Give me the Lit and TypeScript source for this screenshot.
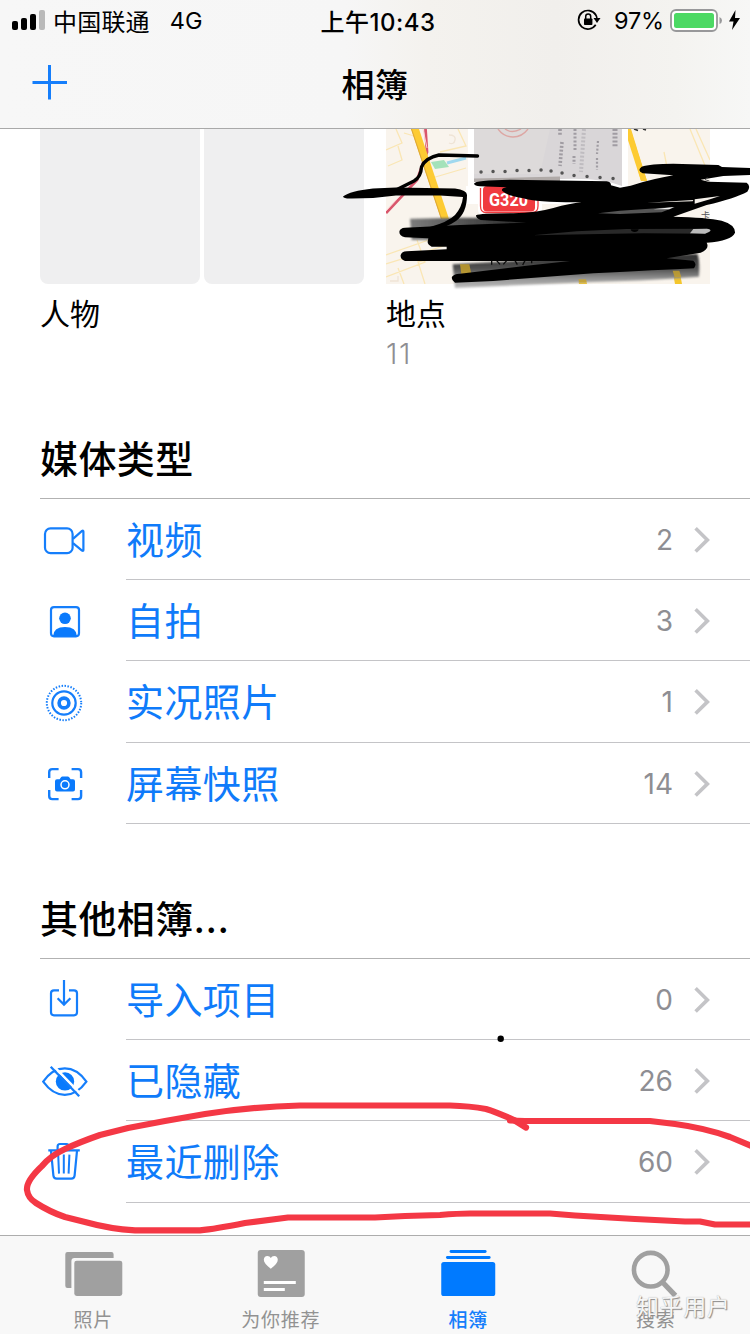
import { LitElement, html, svg, css } from 'lit';
import { customElement, property } from 'lit/decorators.js';

interface AlbumRow {
  icon: string;
  name: string;
  count: number;
}

const mediaTypes: AlbumRow[] = [
  { icon: 'video', name: '视频', count: 2 },
  { icon: 'selfie', name: '自拍', count: 3 },
  { icon: 'live', name: '实况照片', count: 1 },
  { icon: 'screenshot', name: '屏幕快照', count: 14 },
];

const otherAlbums: AlbumRow[] = [
  { icon: 'import', name: '导入项目', count: 0 },
  { icon: 'hidden', name: '已隐藏', count: 26 },
  { icon: 'trash', name: '最近删除', count: 60 },
];

const tabs = [
  { icon: 'photos', name: '照片', active: false },
  { icon: 'foryou', name: '为你推荐', active: false },
  { icon: 'albums', name: '相簿', active: true },
  { icon: 'search', name: '搜索', active: false },
];

const rowIcons: Record<string, unknown> = {
  video: svg`
    <rect x="5" y="12.4" width="27.600" height="24.800" rx="5.500"/>
    <path d="M33 22.800 42 15Q43.400 14.200 43.400 15.600V34Q43.400 35.400 42 34.600L33 27.200"/>`,
  selfie: svg`
    <rect x="11" y="10.100" width="28" height="29.200" rx="3"/>
    <circle class="solid" cx="25" cy="21.300" r="5.800"/>
    <path class="solid" d="M13 39.300Q13.600 30 25 30T37 39.300Z"/>`,
  live: svg`
    <circle cx="24" cy="25" r="17.200" stroke-width="2" stroke-dasharray="1.500 1.502"/>
    <circle cx="24" cy="25" r="11.700"/>
    <circle cx="24" cy="25" r="4.900" stroke-width="3.600"/>`,
  screenshot: svg`
    <path d="M9.200 19V13.200Q9.200 10.100 12.300 10.100H18.600M31.600 10.100H38Q41.100 10.100 41.100 13.200V19M41.100 31V37Q41.100 40.100 38 40.100H31.600M18.600 40.100H12.300Q9.200 40.100 9.200 37V31" stroke-width="2.400"/>
    <path class="solid" d="M17 20.300H19.600L21.200 18Q21.600 17.400 22.400 17.400H27.800Q28.600 17.400 29 18L30.600 20.300H33Q35 20.300 35 22.300V30.600Q35 32.600 33 32.600H17Q15 32.600 15 30.600V22.300Q15 20.300 17 20.300Z"/>
    <circle cx="25" cy="25.800" r="4" stroke="#fff" stroke-width="1.500"/>`,
  import: svg`
    <path d="M19 14.300H14Q11 14.300 11 17.300V36.300Q11 39.300 14 39.300H34Q37 39.300 37 36.300V17.300Q37 14.300 34 14.300H29"/>
    <path d="M24 4V28.600M17.600 22.200 24 28.600 30.400 22.200"/>`,
  hidden: svg`
    <circle class="solid" cx="25" cy="24.400" r="9.200"/>
    <path d="M3.200 24.600Q12.600 11.400 24.800 11.400T46.400 24.600Q37 37.800 24.800 37.800T3.200 24.600Z"/>
    <path d="M12.600 8.200 41.400 37.800" stroke="#fff" stroke-width="2.600"/>
    <path d="M10.700 9.800 39.200 39.300" stroke-width="2.300"/>`,
  trash: svg`
    <path d="M8.300 12.400H39.800M17.600 12V8.400Q17.600 6 20 6H26.400Q28.800 6 28.800 8.400V12"/>
    <path d="M11 12.800 13.400 37.600Q13.800 40.600 16.600 40.600H31.400Q34.200 40.600 34.600 37.600L37 12.800"/>
    <path d="M18.200 16.600 19 35.600M23.800 16.600V35.600M29.400 16.600 28.600 35.600" stroke-width="2"/>`,
};

const tabIcons: Record<string, unknown> = {
  photos: svg`
    <path d="M5.500 6H49.400Q51.600 6 51.600 8.200V12H12.400Q9.400 12 9.400 15V42H5.500Q3.300 42 3.300 39.800V8.200Q3.300 6 5.500 6Z"/>
    <rect x="12.300" y="14.700" width="48" height="35.300" rx="2.400"/>`,
  foryou: svg`
    <rect x="8.750" y="4" width="47" height="47" rx="3"/>
    <path fill="#fff" d="M21.800 22.700Q14.800 17.600 14.800 13.800 15 10 18.400 10 20.800 10 21.800 12 22.800 10 25.200 10 28.600 10 28.800 13.800 28.800 17.600 21.800 22.700Z"/>
    <path fill="#fff" d="M14.800 35H46.800V38H14.800ZM14.800 42H35.800V45H14.800Z"/>`,
  albums: svg`
    <rect x="12.600" y="4" width="37" height="3" rx="1.400"/>
    <rect x="9" y="10" width="44.600" height="3" rx="1.400"/>
    <rect x="4.250" y="16" width="54" height="34" rx="2.600"/>`,
  search: svg`
    <circle cx="26.750" cy="23.700" r="16.800" fill="none" stroke="currentColor" stroke-width="4.600"/>
    <path d="M38.600 36.200 51.400 49.600" stroke="currentColor" stroke-width="5.200"/>`,
};

@customElement('album-list')
class AlbumList extends LitElement {
  @property() heading = '';
  @property({ attribute: false }) rows: AlbumRow[] = [];

  static styles = css`
    :host { display: block; }
    h2 {
      margin: 0 0 0 40px;
      height: 77px;
      line-height: 77px;
      font-size: 38px;
      font-weight: 500;
      letter-spacing: 0.4px;
      border-bottom: 1px solid #b2b2b2;
      color: #000;
    }
    .row { display: flex; align-items: center; height: 81.2px; padding-left: 40px; }
    .icon {
      flex: none; width: 48px; height: 48px; color: #157efb;
      fill: none; stroke: currentColor; stroke-width: 2.2;
    }
    .solid { fill: #0a7afc; stroke: none; }
    .body {
      flex: 1; display: flex; align-items: center; box-sizing: border-box;
      height: 100%; margin-left: 38px; padding-right: 40px;
      border-bottom: 1px solid #c4c4c7;
    }
    .name { flex: 1; font-size: 38px; line-height: 78px; padding-top: 2px; color: #0f7bfa; letter-spacing: 0.4px; }
    .count { font-family: Inter, "Liberation Sans", sans-serif; font-size: 28px; padding-top: 2px; color: #8e8e93; }
    .chevron { width: 17px; height: 28px; margin-left: 20px; fill: none; stroke: #c4c4c7; stroke-width: 3.6; }
  `;

  render() {
    return html`
      <h2>${this.heading}</h2>
      ${this.rows.map(
        (r) => html`
          <div class="row">
            <svg class="icon" viewBox="0 0 48 48">${rowIcons[r.icon]}</svg>
            <div class="body">
              <span class="name">${r.name}</span>
              <span class="count">${r.count}</span>
              <svg class="chevron" viewBox="0 0 17 28"><path d="M2.600 3.300 14.400 14.900 2.600 26.500"/></svg>
            </div>
          </div>
        `,
      )}
    `;
  }
}

@customElement('app-root')
class AppRoot extends LitElement {
  static styles = css`
    :host {
      display: flex; flex-direction: column; position: relative;
      width: 750px; height: 1334px; overflow: hidden; background: #fff; color: #000;
      font-family: Inter, "Noto Sans CJK SC", sans-serif;
    }
    .header {
      flex: none; height: 128px; border-bottom: 1px solid #a9a9a9;
      background: linear-gradient(90deg, #f7f7f7 0%, #f6f6f6 46%, #f4f2ee 57%, #f1efec 74%, #f4f3f0 90%, #f7f7f6 100%);
    }
    .status { display: grid; grid-template-columns: 1fr auto 1fr; height: 40px; align-items: center; font-size: 24px; }
    .side { display: flex; align-items: center; }
    .left { padding-left: 12px; }
    .right { justify-content: flex-end; padding-right: 9px; }
    .signal { width: 33px; height: 20px; margin-right: 8px; }
    .carrier { letter-spacing: 0.2px; }
    .network { margin-left: 20px; font-size: 23.5px; padding-top: 1px; }
    .time { font-weight: 500; letter-spacing: 0.5px; padding-left: 6px; }
    .lock { width: 24px; height: 22px; margin-right: 13px; }
    .percent { font-size: 23.5px; padding-top: 1px; letter-spacing: -0.2px; }
    .battery { width: 52px; height: 24px; margin-left: 6px; }
    .bolt { width: 13px; height: 20px; margin-left: 6px; }
    .nav { display: grid; grid-template-columns: 1fr auto 1fr; height: 88px; align-items: center; }
    .plus { width: 36px; height: 36px; margin-left: 32px; margin-bottom: 4px; }
    .title { font-size: 33px; font-weight: 500; line-height: 86px; padding-top: 2px; letter-spacing: 0.4px; }
    .content { flex: 1; min-height: 0; overflow: hidden; }
    .cards { display: flex; gap: 22px; padding-left: 40px; height: 292px; }
    .card { width: 324px; }
    .people { display: flex; gap: 4px; height: 155px; }
    .face { flex: 1; background: #efeff0; border-radius: 0 0 8px 8px; }
    .map { display: block; width: 324px; height: 155px; }
    .caption { font-size: 30px; line-height: 40px; margin-top: 10px; }
    .tally { font-size: 29px; line-height: 40px; color: #8e8e93; font-weight: 300; letter-spacing: 1.6px; }
    .other { margin-top: 57.2px; }
    .tabbar {
      flex: none; display: grid; grid-template-columns: repeat(4, 1fr);
      height: 98px; border-top: 1px solid #adadad; background: #f8f8f8;
    }
    .tab { display: flex; flex-direction: column; align-items: center; padding-top: 10px; color: #a0a0a0; fill: currentColor; }
    .tab svg { width: 64px; height: 52px; }
    .tab span { font-size: 19px; line-height: 24px; margin-top: 11px; margin-left: -1px; letter-spacing: 0.8px; color: #929292; }
    .tab.active { color: #007aff; }
    .tab.active span { color: #157efb; font-weight: 500; }
    .ink { position: absolute; inset: 0; width: 750px; height: 1334px; pointer-events: none; }
    .watermark {
      position: absolute; left: 636px; top: 1290px; font-size: 23px; line-height: 34px;
      color: #f6f6f6; letter-spacing: 0.6px;
      text-shadow: 1px 1px 1px #888, 0 0 1px #aaa;
    }
  `;

  private map() {
    return html`
      <svg class="map" viewBox="386 129 324 155">
        <rect x="386" y="129" width="324" height="155" fill="#f9f4ed"/>
        <g fill="none" stroke="#fae6b4" stroke-width="1.3">
          <path d="M386 150 402 143 396 129M388 166 402 160 398 146M386 255 440 236M386 277 425 262 417 240M404 284 398 268M386 264 450 244M425 284 418 262 460 250M404 133 414 136M440 152 466 146 458 129M432 178 466 168M690 129 706 168M696 129 710 160M664 152 668 172"/>
          <path d="M390 281h8v-5M449 135q7 0 6 5t-6 3" stroke="#efe4d6"/>
        </g>
        <path d="M431 162 444 160 449 167 435 169Z" fill="#a4e2ba"/>
        <path d="M447 163 466 158" stroke="#9fd8ef" stroke-width="3"/>
        <path d="M425.500 129 427 152 417 180 386 213" fill="none" stroke="#d9566c" stroke-width="2.8"/>
        <path d="M423 129 427 148M408 187 386 211" stroke="#fbd5d5" stroke-width="1"/>
        <path d="M411 129H419L449 219H441Z" fill="#fdcb33"/>
        <path d="M411.500 129 441.500 219" stroke="#dca63a" stroke-width="1"/>
        <path d="M627 129H631L647 181H641L627 137Z" fill="#fdcb33"/>
        <rect x="468" y="129" width="160" height="61" fill="#fff"/>
        <path d="M628 133 631 131 647 181H641Z" fill="#fdcb33"/>
        <path d="M474 129H622V186Q600 177 560 179L474 181Z" fill="#d9d6d8"/>
        <path d="M474 129H550L540 174H474Z" fill="#dddada"/>
        <path d="M474 178.500 560 176.500 560 181 474 182Z" fill="#b0aaa8"/>
        <path d="M498 129Q504 137 513 137T528 129M505 129Q512 134 521 129" fill="none" stroke="#dda7a4" stroke-width="1.4"/>
        <path d="M481 172h.1M493 171.500h.1M505 171.500h.1M517 170.500h.1M529 170.500h.1M541 170h.1M551 171h.1M562 173h.1M574 175.500h.1M587 176.500h.1M600 177.500h.1M613 178.500h.1" stroke="#555" stroke-width="3.4" stroke-linecap="round"/>
        <g fill="none" stroke="#a09ca2" stroke-dasharray="2 1.800">
          <path d="M560 129V135M562 142 560 166" stroke-width="3.600"/>
          <path d="M575 129V150M574 156V164" stroke-width="3"/>
          <path d="M584 129 581 172" stroke="#bfbcc0" stroke-width="4"/>
          <path d="M598 141 597 154M597 158V170" stroke-width="2.200"/>
          <path d="M615 129V148" stroke-width="5"/>
        </g>
        <path d="M634 129l4 1.500M643 129l3 1" stroke="#333" stroke-width="1.600"/>
        <rect x="466" y="186" width="110" height="18" fill="#fff"/>
        <rect x="478" y="186" width="64" height="29" rx="5" fill="#fff"/>
        <path d="M480.500 188V206Q480.500 212.500 486 212.500H532Q538 212.500 538 206V194" fill="#fff" stroke="#ee3c40" stroke-width="1.300"/>
        <rect x="483" y="186" width="52" height="25.500" rx="4" fill="#f03a3f"/>
        <text x="489" y="205.500" font-size="18.500" font-weight="700" fill="#fff" font-family="Roboto, sans-serif" textLength="39" lengthAdjust="spacingAndGlyphs">G320</text>
        <path d="M577 275H585L587 284H579ZM672 268H679L682 284H675Z" fill="#f4c62c"/>
        <text x="701" y="219" font-size="9" fill="#555">卡</text>
      </svg>
    `;
  }

  private ink() {
    return html`
      <svg class="ink" viewBox="0 0 750 1334">
        <defs>
          <linearGradient id="fadeX" x1="0" x2="1">
            <stop offset="0" stop-color="#7c7c7c"/><stop offset=".3" stop-color="#444"/><stop offset=".6" stop-color="#111"/>
          </linearGradient>
          <linearGradient id="fadeY" x1="0" x2="0" y1="0" y2="1">
            <stop offset="0" stop-color="#2a2a2a"/><stop offset=".45" stop-color="#555"/><stop offset=".75" stop-color="#999"/><stop offset="1" stop-color="#bbb"/>
          </linearGradient>
          <filter id="soft" x="-5%" y="-20%" width="110%" height="140%"><feGaussianBlur stdDeviation="3"/></filter>
        </defs>
        <g transform="translate(460 150) scale(.33333)">
          <path d="M-150 206 0 203 600 208V270H-145Z" fill="url(#fadeX)" filter="url(#soft)"/>
          <path d="M-22 343 300 325 712 312Q720 330 717 380 600 390 400 396L-15 414Z" fill="url(#fadeY)" filter="url(#soft)"/>
          <path d="M0 343H28L34 372H4ZM355 388H378L380 397H358ZM638 362H658L664 382H644Z" fill="#c9a227" opacity=".8"/>
          <path d="M95 332V344M110 332 120 343M140 332 130 343M165 332 172 344M195 332 188 345M215 332V340" stroke="#0c0c0c" stroke-width="4"/>
          <path d="M42 101Q44 90 150 89L440 94Q454 97 453 106L480 113 512 107Q580 86 640 76L548 70Q530 62 545 50 570 41 640 41L775 45 786 51 870 54V75L790 78 722 89 745 95 860 98Q874 108 862 125 825 145 740 165L640 200Q740 202 785 212 826 224 825 248 815 272 740 278 750 296 722 308L620 325 700 332Q712 342 702 355 600 360 400 370L100 393-15 398Q-27 390-24 380-15 370 0 371L200 347 330 333H-165Q-180 327-178 315-175 305-160 304L-40 298V290H-85Q-98 284-97 275L-95 265-165 262Q-182 258-182 245-180 234-165 233L0 225 200 218 62 210Q48 206 48 196 60 190 160 190 230 188 280 174 330 160 365 157 230 158 190 145 140 136 128 124 120 116 140 112L60 109Q44 107 42 101Z" fill="#000"/>
          <path d="M218 256 350 244 500 237 740 236Q765 240 735 251L550 250 420 252Z" fill="#292929"/>
          <path d="M740 236Q765 240 735 251L690 250 700 237Z" fill="#bbb"/>
          <path d="M512 238H536Q534 246 524 246T512 238Z" fill="#000"/>
          <path d="M414 190 480 182 645 171 605 187 480 192Z" fill="#555"/>
          <path d="M580 178 642 171 628 178Z" fill="#eee"/>
          <path d="M560 158 700 150 698 154Z" fill="#f6f1eb"/>
          <path d="M704 148 780 138 750 148 704 161Z" fill="#f6f1eb"/>
          <path d="M742 83 735 89 748 93" stroke="#555" stroke-width="3" fill="none"/>
        </g>
        <path d="M477.500 156 439 155Q425 158 421.500 167 421 177 414 181L396 190" fill="none" stroke="#000" stroke-width="3.400" stroke-linecap="round"/>
        <path d="M343 196.500Q350 191 373 188.500L396 187.500 455 188.500Q467 190 467 195 467 213 456 221 446 228 434 229L430 227Q448 222 455 215 462 207 463 197L440 195.500 396 195.500 373 198 352 198.500Q344 199 343 196.500Z"/>
        <circle cx="500.700" cy="1038.800" r="3.200"/>
        <g fill="none" stroke="#f43845" stroke-width="6.200" stroke-linecap="round" stroke-linejoin="round">
          <path d="M526 1127.500 514 1120Q496 1112 486 1109 470 1106 450 1105.500H300Q250 1107 205 1114L165 1121 128 1128 100 1135Q80 1142 65 1149 50 1156 42 1166 26 1181 27 1190 28 1198 36 1203 50 1212 65 1217L85 1222Q110 1229 135 1230.300H200Q215 1229 245 1223L288 1217.500H375L405 1216 440 1215Q458 1213.500 470 1213.500H550L575 1215.500 635 1219 685 1221.500H700L715 1224.500H752"/>
          <path d="M510 1120.500 525 1121H650L675 1124Q705 1128 730 1137L754 1147"/>
        </g>
      </svg>
    `;
  }

  render() {
    return html`
      <div class="header">
        <div class="status">
          <div class="side left">
            <svg class="signal" viewBox="0 0 33 20">
              <rect x="0" y="11" width="6" height="9" rx="2"/><rect x="9" y="8" width="6" height="12" rx="2"/>
              <rect x="18" y="4" width="6" height="16" rx="2"/><rect x="27" y="0" width="6" height="20" rx="2" fill="#b9b9b9"/>
            </svg>
            <span class="carrier">中国联通</span><span class="network">4G</span>
          </div>
          <span class="time">上午10:43</span>
          <div class="side right">
            <svg class="lock" viewBox="0 0 24 22">
              <path d="M18.700 5.800A9.300 9.300 0 1 0 18.700 15.800" fill="none" stroke="#000" stroke-width="1.700"/>
              <path d="M16.500 9H23.500L20 14Z"/><path d="M18.200 5Q20 7.500 20 10" fill="none" stroke="#000" stroke-width="1.700"/>
              <rect x="7" y="9.500" width="8.400" height="6.600" rx=".8"/>
              <path d="M8.700 10V7.500Q8.700 5 11.200 5T13.700 7.500V10" fill="none" stroke="#000" stroke-width="1.500"/>
            </svg>
            <span class="percent">97%</span>
            <svg class="battery" viewBox="0 0 52 24">
              <rect x="1" y="2" width="46" height="21" rx="5" fill="#fff" stroke="#98989a" stroke-width="1.800"/>
              <rect x="4" y="5" width="40" height="15" rx="2.500" fill="#4cd964"/>
              <path d="M49.500 9Q52 10 52 12.500T49.500 16Z" fill="#98989a"/>
            </svg>
            <svg class="bolt" viewBox="0 0 13 20"><path d="M7.500 0 1 11.500H5.500L4 20 12 8H7Z"/></svg>
          </div>
        </div>
        <div class="nav">
          <svg class="plus" viewBox="0 0 36 36"><path d="M17.500 1V35.500M.5 18.500H35" stroke="#157efb" stroke-width="3"/></svg>
          <span class="title">相簿</span><span></span>
        </div>
      </div>
      <div class="content">
        <div class="cards">
          <div class="card">
            <div class="people"><div class="face"></div><div class="face"></div></div>
            <div class="caption">人物</div>
          </div>
          <div class="card">
            ${this.map()}
            <div class="caption">地点</div>
            <div class="tally">11</div>
          </div>
        </div>
        <album-list heading="媒体类型" .rows=${mediaTypes}></album-list>
        <album-list class="other" heading="其他相簿..." .rows=${otherAlbums}></album-list>
      </div>
      <div class="tabbar">
        ${tabs.map(
          (t) => html`
            <div class="tab ${t.active ? 'active' : ''}">
              <svg viewBox="0 0 64 52">${tabIcons[t.icon]}</svg>
              <span>${t.name}</span>
            </div>
          `,
        )}
      </div>
      ${this.ink()}
      <div class="watermark">知乎用户</div>
    `;
  }
}
